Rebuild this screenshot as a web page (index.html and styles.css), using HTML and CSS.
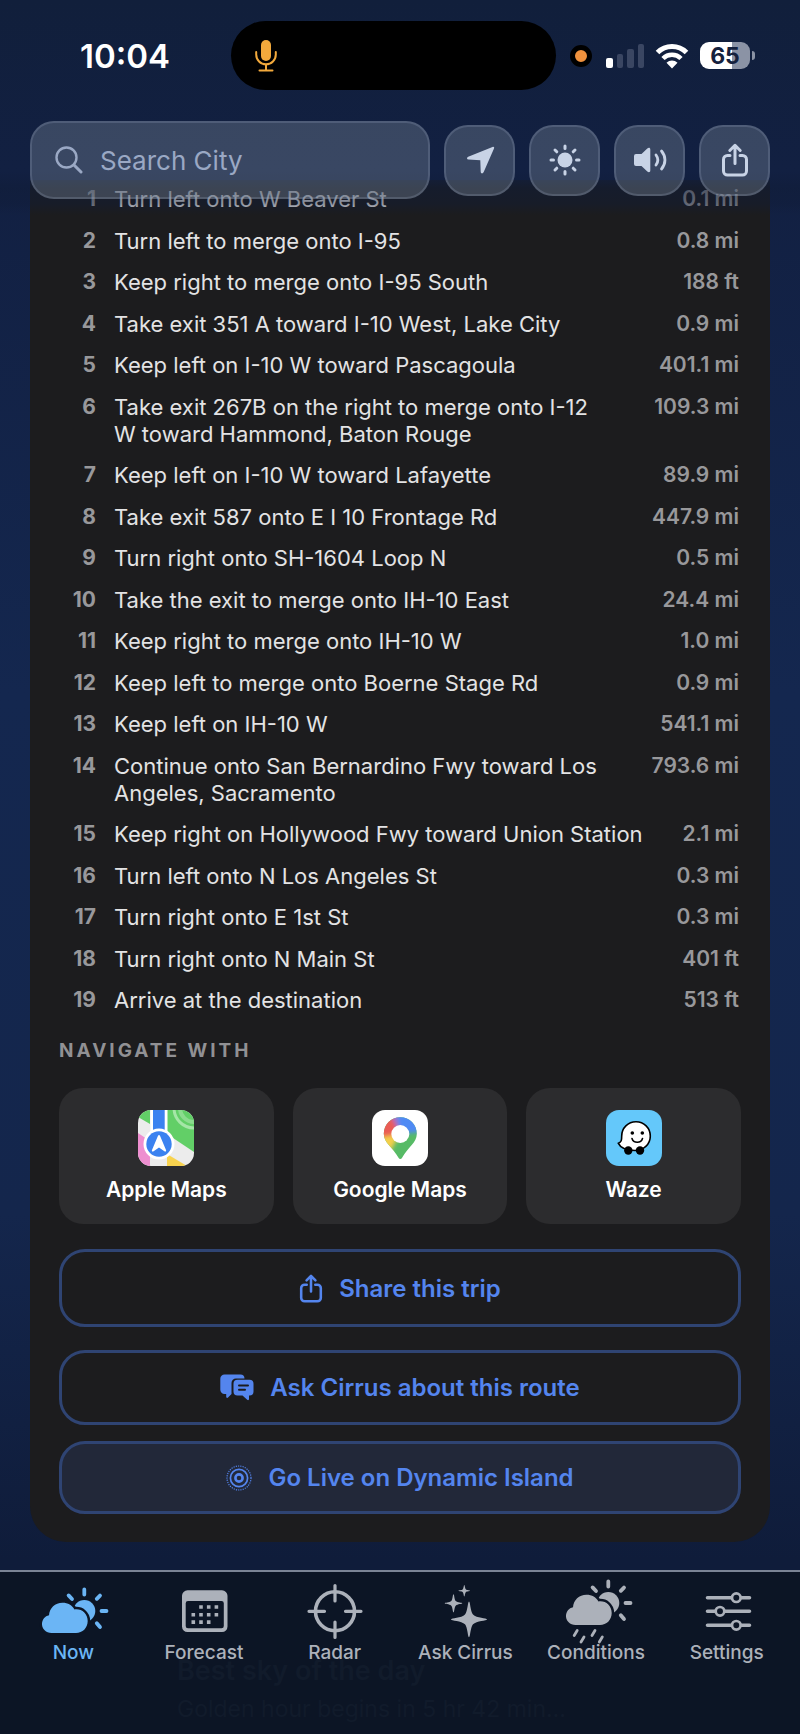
FILE: index.html
```html
<!DOCTYPE html>
<html lang="en">
<head>
    <meta charset="UTF-8">
    <meta name="viewport" content="width=device-width, initial-scale=1.0">
    <title>Cirrus - Route</title>
    <link rel="stylesheet" href="styles.css">
</head>
<body>
    <!-- shared icon shapes -->
    <svg class="defs" width="0" height="0" aria-hidden="true">
        <symbol id="cloud-sun" viewBox="0 0 72 62" overflow="visible">
            <circle cx="47.3" cy="31" r="11" fill="currentColor"/>
            <path d="M47.3 9.5v5M64.5 31h5M59.8 18.8l3.2-3.2M59.8 43.2l3.2 3.8M35 19l-3.4-3.6" fill="none" stroke="currentColor" stroke-width="3.8" stroke-linecap="round"/>
            <path class="cloud" d="M14.5 53C9 53 5 49 5 44.3C5 39.5 8 36 12 35.2C12.5 28 18 22.7 25.5 22.7C31 22.7 35.2 25.4 37.5 29.5C44.5 28.5 50.7 33.5 50.7 41C50.7 48 45.5 53 39 53Z" fill="currentColor"/>
        </symbol>
        <symbol id="share" viewBox="0 0 28 34">
            <path d="M9 12.500H6.500a4 4 0 0 0-4 4V28a4 4 0 0 0 4 4h15a4 4 0 0 0 4-4V16.500a4 4 0 0 0-4-4H19M14 20.500V3M8.800 7.500L14 2.300l5.200 5.200" fill="none" stroke="currentColor" stroke-width="3" stroke-linecap="round" stroke-linejoin="round"/>
        </symbol>
    </svg>

    <header class="header">
        <div class="status">
            <span class="time">10:04</span>
            <div class="island">
                <svg width="22" height="34" viewBox="0 0 22 34">
                    <rect x="6" y="1" width="10" height="21" rx="5" fill="#f2a93c"/>
                    <path d="M1.200 13v2.500a9.800 9.800 0 0 0 19.600 0V13M11 25.500V31M4.500 31.500h13" fill="none" stroke="#f2a93c" stroke-width="2" stroke-linecap="round"/>
                </svg>
            </div>
            <span class="mic-dot"></span>
            <svg class="signal" width="39" height="25" viewBox="0 0 39 25">
                <rect x="0" y="15" width="7" height="10" rx="2" fill="#fff"/>
                <rect x="11" y="11" width="6" height="14" rx="2" fill="#3a4662"/>
                <rect x="21" y="6" width="7" height="19" rx="2" fill="#3a4662"/>
                <rect x="32" y="1" width="6" height="24" rx="2" fill="#3a4662"/>
            </svg>
            <svg class="wifi" width="34" height="26" viewBox="0 0 34 26">
                <path d="M2.500 9.500a20.500 20.500 0 0 1 29 0" fill="none" stroke="#fff" stroke-width="5"/>
                <path d="M8 15.500a12.700 12.700 0 0 1 18 0" fill="none" stroke="#fff" stroke-width="4.600"/>
                <path d="M11.500 19.700a8 8 0 0 1 11 0L17 25.500Z" fill="#fff"/>
            </svg>
            <div class="battery">65</div>
        </div>

        <div class="toolbar">
            <label class="search">
                <svg width="28" height="28" viewBox="0 0 28 28">
                    <circle cx="11.500" cy="11.500" r="10" fill="none" stroke="currentColor" stroke-width="2.400"/>
                    <path d="M19 19l7 7" stroke="currentColor" stroke-width="3" stroke-linecap="round"/>
                </svg>
                <input type="text" placeholder="Search City" aria-label="Search City">
            </label>
            <button class="tool" type="button" aria-label="My location">
                <svg width="36" height="36" viewBox="0 0 36 36">
                    <path d="M30.500 5C31.800 4.500 32.600 5.300 32 6.600L21.600 30.300C20.800 32 18.800 31.800 18.700 29.800L18.300 18.300L6.500 17.600C4.600 17.400 4.500 15.500 6.200 14.800Z" fill="currentColor"/>
                </svg>
            </button>
            <button class="tool" type="button" aria-label="Brightness">
                <svg width="36" height="36" viewBox="0 0 36 36">
                    <circle cx="18" cy="18" r="7.500" fill="currentColor"/>
                    <path d="M18 4v2.500M18 29.500V32M4 18h2.500M29.500 18H32M8 8l1.800 1.800M26.200 26.200L28 28M8 28l1.800-1.800M26.200 9.800L28 8" stroke="currentColor" stroke-width="3" stroke-linecap="round"/>
                </svg>
            </button>
            <button class="tool" type="button" aria-label="Sound">
                <svg width="36" height="36" viewBox="0 0 36 36">
                    <path d="M2 14a2 2 0 0 1 2-2h5.500L15.300 6.500C16.800 5.200 18.300 5.700 18.300 7.500V28.500C18.300 30.300 16.800 30.800 15.300 29.500L9.500 24H4a2 2 0 0 1-2-2Z" fill="currentColor"/>
                    <path d="M24 13c2.200 3 2.200 7 0 10M29.500 9c4.600 5.500 4.600 12.500 0 18" fill="none" stroke="currentColor" stroke-width="2.800" stroke-linecap="round"/>
                </svg>
            </button>
            <button class="tool" type="button" aria-label="Share">
                <svg width="28" height="34"><use href="#share"/></svg>
            </button>
        </div>
    </header>

    <main class="main">
        <section class="card">
            <ol class="steps">
                <li><span class="num">1</span><span class="text">Turn left onto W Beaver St</span><span class="dist">0.1 mi</span></li>
                <li><span class="num">2</span><span class="text">Turn left to merge onto I-95</span><span class="dist">0.8 mi</span></li>
                <li><span class="num">3</span><span class="text">Keep right to merge onto I-95 South</span><span class="dist">188 ft</span></li>
                <li><span class="num">4</span><span class="text">Take exit 351 A toward I-10 West, Lake City</span><span class="dist">0.9 mi</span></li>
                <li><span class="num">5</span><span class="text">Keep left on I-10 W toward Pascagoula</span><span class="dist">401.1 mi</span></li>
                <li><span class="num">6</span><span class="text">Take exit 267B on the right to merge onto I-12 W&nbsp;toward Hammond, Baton Rouge</span><span class="dist">109.3 mi</span></li>
                <li><span class="num">7</span><span class="text">Keep left on I-10 W toward Lafayette</span><span class="dist">89.9 mi</span></li>
                <li><span class="num">8</span><span class="text">Take exit 587 onto E I 10 Frontage Rd</span><span class="dist">447.9 mi</span></li>
                <li><span class="num">9</span><span class="text">Turn right onto SH-1604 Loop N</span><span class="dist">0.5 mi</span></li>
                <li><span class="num">10</span><span class="text">Take the exit to merge onto IH-10 East</span><span class="dist">24.4 mi</span></li>
                <li><span class="num">11</span><span class="text">Keep right to merge onto IH-10 W</span><span class="dist">1.0 mi</span></li>
                <li><span class="num">12</span><span class="text">Keep left to merge onto Boerne Stage Rd</span><span class="dist">0.9 mi</span></li>
                <li><span class="num">13</span><span class="text">Keep left on IH-10 W</span><span class="dist">541.1 mi</span></li>
                <li><span class="num">14</span><span class="text">Continue onto San Bernardino Fwy toward Los Angeles, Sacramento</span><span class="dist">793.6 mi</span></li>
                <li><span class="num">15</span><span class="text">Keep right on Hollywood Fwy toward Union Station</span><span class="dist">2.1 mi</span></li>
                <li><span class="num">16</span><span class="text">Turn left onto N Los Angeles St</span><span class="dist">0.3 mi</span></li>
                <li><span class="num">17</span><span class="text">Turn right onto E 1st St</span><span class="dist">0.3 mi</span></li>
                <li><span class="num">18</span><span class="text">Turn right onto N Main St</span><span class="dist">401 ft</span></li>
                <li><span class="num">19</span><span class="text">Arrive at the destination</span><span class="dist">513 ft</span></li>
            </ol>

            <h2 class="heading">NAVIGATE WITH</h2>
            <div class="apps">
                <button class="app" type="button">
                    <svg class="app-icon" width="56" height="56" viewBox="0 0 56 56">
                        <rect width="56" height="56" fill="#ececec"/>
                        <path d="M0 0H12V14L0 7Z" fill="#62cf67"/>
                        <path d="M29 0H56V42L29 24Z" fill="#62cf67"/>
                        <circle cx="56" cy="-2" r="20" fill="none" stroke="#a5e6a7" stroke-width="3"/>
                        <circle cx="56" cy="-2" r="14" fill="none" stroke="#8bdc8e" stroke-width="4"/>
                        <path d="M0 23L12 31V56H0Z" fill="#ee8fd0"/>
                        <path d="M29 44L49 56H29Z" fill="#f8d34f"/>
                        <path d="M12.500 0h17v24h-17Z" fill="#fff"/>
                        <path d="M15 0h11.700v24H15Z" fill="#3b82f0"/>
                        <circle cx="21" cy="34" r="15.500" fill="#fff"/>
                        <circle cx="21" cy="34" r="12.700" fill="#3b82f0"/>
                        <path d="M20 25.800c.5-1.200 1.500-1.200 2 0l6 14.200c.5 1.300-.5 2-1.600 1.300L21 37.500l-5.400 3.800c-1.100.7-2.100 0-1.600-1.300Z" fill="#fff"/>
                    </svg>
                    Apple Maps
                </button>
                <button class="app" type="button">
                    <svg class="app-icon" width="56" height="56" viewBox="0 0 56 56">
                        <defs>
                            <clipPath id="pin"><path d="M28.300 7.300C19 7.300 11.800 14.700 11.800 23.800C11.800 33 21 37.500 26.500 47.800C27.400 49.500 29.200 49.500 30.100 47.800C35.600 37.500 44.800 33 44.800 23.800C44.800 14.700 37.600 7.300 28.300 7.300Z"/></clipPath>
                            <filter id="soft"><feGaussianBlur stdDeviation="2.200"/></filter>
                        </defs>
                        <rect width="56" height="56" fill="#fff"/>
                        <g clip-path="url(#pin)">
                            <rect width="56" height="56" fill="#57bb66"/>
                            <g filter="url(#soft)">
                                <path d="M28 24L3 22L4 44H17Z" fill="#f3cf4b"/>
                                <path d="M28 24L5 28L2 0H22Z" fill="#ea5b55"/>
                                <path d="M28 24L17 2L26 0Z" fill="#a270c8"/>
                                <path d="M28 24L24 0H54L50 22Z" fill="#4f8af4"/>
                            </g>
                        </g>
                        <circle cx="28.300" cy="24" r="9" fill="#fff"/>
                    </svg>
                    Google Maps
                </button>
                <button class="app" type="button">
                    <svg class="app-icon" width="56" height="56" viewBox="0 0 56 56">
                        <rect width="56" height="56" fill="#64c8fa"/>
                        <path d="M30 11.700C38 11.700 44.300 18 44.300 26C44.300 34.500 37.500 40.500 29 40.500C21 40.500 14.500 38 12.200 33.200C15.500 32.500 15.700 30 15.700 26C15.700 18 22 11.700 30 11.700Z" fill="#fff" stroke="#000" stroke-width="1.600" stroke-linejoin="round"/>
                        <circle cx="22.300" cy="40.500" r="4.200"/>
                        <circle cx="34" cy="40.500" r="4.200"/>
                        <circle cx="26.300" cy="23" r="1.800"/>
                        <circle cx="36.300" cy="23" r="1.800"/>
                        <path d="M26 28.500c1.500 5 9 5 10.500 0" fill="none" stroke="#000" stroke-width="1.600" stroke-linecap="round"/>
                    </svg>
                    Waze
                </button>
            </div>

            <button class="action share-trip" type="button">
                <svg width="24" height="29"><use href="#share"/></svg>
                Share this trip
            </button>
            <button class="action ask" type="button">
                <svg width="34" height="27" viewBox="0 0 34 27">
                    <path d="M4.500 0.500h16c2.500 0 4 1.500 4 4H16a4.500 4.500 0 0 0-4.500 4.500v11L8 23.500c-.8.800-1.800.3-1.800-.8V20H4.500a4.200 4.200 0 0 1-4.200-4.200V4.700A4.200 4.200 0 0 1 4.500.5Z" fill="currentColor"/>
                    <path d="M17.500 5.800h12a4 4 0 0 1 4 4V17.500a4 4 0 0 1-4 4H29V25c0 1.200-1 1.500-1.800.8L22.500 21.500h-5a4 4 0 0 1-4-4V9.800a4 4 0 0 1 4-4Z" fill="currentColor"/>
                    <path d="M19 11.500h9M19 15.700h6" stroke="#1c1c1e" stroke-width="2" stroke-linecap="round"/>
                </svg>
                Ask Cirrus about this route
            </button>
            <button class="action live" type="button">
                <svg width="26" height="26" viewBox="0 0 26 26" fill="none" stroke="currentColor">
                    <circle cx="13" cy="13" r="3.600" stroke-width="2.600"/>
                    <circle cx="13" cy="13" r="8.600" stroke-width="1.700"/>
                    <circle cx="13" cy="13" r="12" stroke-width="1.200" stroke-dasharray="1.200 1.100"/>
                </svg>
                Go Live on Dynamic Island
            </button>
        </section>
    </main>

    <nav class="tabs">
        <!-- next card, just visible through the bar -->
        <div class="next-card" aria-hidden="true">
            <b>Best sky of the day</b>
            <span>Golden hour begins in 5 hr 42 min…</span>
        </div>
        <a class="tab active" href="#">
            <svg width="72" height="62"><use href="#cloud-sun"/></svg>
            Now
        </a>
        <a class="tab" href="#">
            <svg width="72" height="62" viewBox="0 0 72 62" fill="currentColor">
                <path fill-rule="evenodd" d="M19.500 10.300H54a5.500 5.500 0 0 1 5.500 5.500V46.500a5.500 5.500 0 0 1-5.500 5.500H19.500a5.500 5.500 0 0 1-5.500-5.500V15.800a5.500 5.500 0 0 1 5.500-5.500ZM20 21a2.300 2.300 0 0 0-2.300 2.300V46a2.300 2.300 0 0 0 2.300 2.300H53.500A2.300 2.300 0 0 0 55.800 46V23.300A2.300 2.300 0 0 0 53.500 21Z"/>
                <path d="M31.200 25.200h3.600v3.600h-3.600zM38.900 25.200h3.600v3.600h-3.600zM46.600 25.200h3.600v3.600h-3.600zM23.500 32.900h3.600v3.600h-3.600zM31.200 32.900h3.600v3.600h-3.600zM38.900 32.900h3.600v3.600h-3.600zM46.600 32.900h3.600v3.600h-3.600zM23.500 40.300h3.600v3.600h-3.600zM31.200 40.300h3.600v3.600h-3.600zM38.900 40.300h3.600v3.600h-3.600z"/>
            </svg>
            Forecast
        </a>
        <a class="tab" href="#">
            <svg width="72" height="62" viewBox="0 0 72 62" fill="none" stroke="currentColor" stroke-linecap="round">
                <circle cx="36" cy="31.300" r="19.500" stroke-width="3.600"/>
                <path d="M36 5.500V21M36 42V57.500M10 31.300H25.500M46.500 31.300H62" stroke-width="3.200"/>
            </svg>
            Radar
        </a>
        <a class="tab" href="#">
            <svg width="72" height="62" viewBox="0 0 72 62" fill="currentColor">
                <path d="M40 21.500C41.300 21.500 41.200 31 44 34.500C47.500 38.200 58 38 58 39.400C58 40.800 47.500 40.600 44 44.300C41.200 47.800 41.300 57.300 40 57.300C38.700 57.300 38.800 47.800 36 44.300C32.500 40.600 22 40.800 22 39.400C22 38 32.500 38.200 36 34.500C38.800 31 38.700 21.500 40 21.500Z"/>
                <path d="M24.500 14.200C25.300 14.200 25.200 19 26.700 21C28.500 22.700 33.300 22.500 33.300 23.300C33.300 24.100 28.500 24 26.700 25.700C25.200 27.600 25.300 32.300 24.500 32.300C23.700 32.300 23.800 27.600 22.300 25.700C20.500 24 15.700 24.100 15.700 23.300C15.700 22.500 20.500 22.700 22.300 21C23.800 19 23.700 14.200 24.500 14.200Z"/>
                <path d="M35.300 5C35.900 5 35.800 8 36.800 9.200C38 10.400 41 10.100 41 10.700C41 11.300 38 11 36.800 12.200C35.800 13.400 35.900 16.400 35.300 16.400C34.700 16.400 34.800 13.400 33.800 12.200C32.600 11 29.600 11.300 29.600 10.700C29.600 10.100 32.600 10.400 33.800 9.200C34.800 8 34.700 5 35.300 5Z"/>
            </svg>
            Ask Cirrus
        </a>
        <a class="tab" href="#">
            <svg width="72" height="62" viewBox="0 0 72 62" overflow="visible">
                <use href="#cloud-sun" x="1" y="-8" width="72" height="62"/>
                <path d="M17.200 50.500l-3 5M24 57l-3 5M35 50.500l-3 5M42.300 57l-3 5" stroke="currentColor" stroke-width="2.800" stroke-linecap="round"/>
            </svg>
            Conditions
        </a>
        <a class="tab" href="#">
            <svg width="72" height="62" viewBox="0 0 72 62" stroke="currentColor" fill="#0c1525">
                <path d="M16.500 17.700H58.500M16.500 31.300H58.500M16.500 45.300H58.500" stroke-width="3.600" stroke-linecap="round"/>
                <circle cx="45.300" cy="17.700" r="4.300" stroke-width="2.700"/>
                <circle cx="29" cy="31.300" r="4.300" stroke-width="2.700"/>
                <circle cx="45.300" cy="45.300" r="4.300" stroke-width="2.700"/>
            </svg>
            Settings
        </a>
    </nav>
</body>
</html>
```

FILE: styles.css
```css
* {
    box-sizing: border-box;
}

body {
    margin: 0;
    min-height: 100vh;
    display: flex;
    flex-direction: column;
    font-family: Inter, "Liberation Sans", sans-serif;
    color: #e3e3e4;
    background: linear-gradient(#111f3b, #122042 10%, #14274f 40%, #14264c 70%, #0f1c3a 90%);
}

button {
    font-family: inherit;
    cursor: pointer;
}

svg {
    display: block;
    flex-shrink: 0;
}

.defs {
    position: absolute;
}

/* header, the list scrolls under it */
.header {
    position: sticky;
    top: 0;
    z-index: 2;
    padding: 21px 30px 16px;
    background: linear-gradient(#111f3b, #122042 170px, rgba(16, 28, 56, 0.55) 188px, rgba(16, 28, 56, 0.4) 204px, rgba(16, 28, 56, 0));
}

.status {
    display: flex;
    align-items: center;
    height: 69px;
    padding: 0 15px 0 50px;
}

.time {
    width: 151px;
    font-size: 33px;
    font-weight: 600;
    color: #fff;
}

.island {
    display: flex;
    align-items: center;
    width: 325px;
    height: 69px;
    padding-left: 24px;
    border-radius: 35px;
    background-color: #000;
}

.mic-dot {
    width: 22px;
    height: 22px;
    margin: 0 14px;
    border: 5px solid #000;
    border-radius: 50%;
    background-color: #f0923e;
}

.wifi {
    margin: 0 11px 0 10px;
}

.battery {
    position: relative;
    width: 50px;
    height: 27px;
    border-radius: 9px;
    background: linear-gradient(90deg, #fff 64%, #8b93a5 64%);
    color: #15213d;
    font-size: 23px;
    font-weight: 700;
    line-height: 28px;
    text-align: center;
}

.battery::after {
    content: "";
    position: absolute;
    top: 9px;
    right: -5px;
    width: 3px;
    height: 9px;
    border-radius: 0 5px 5px 0;
    background-color: #8b93a5;
}

.toolbar {
    display: flex;
    align-items: center;
    gap: 14px;
    margin-top: 31px;
}

.search,
.tool {
    border: 2px solid rgba(160, 175, 200, 0.22);
    border-radius: 24px;
    background-color: rgba(150, 162, 175, 0.3);
}

.search {
    flex: 1;
    min-width: 0;
    display: flex;
    align-items: center;
    gap: 17px;
    height: 78px;
    padding: 0 23px;
    color: #9aa8c4;
}

.search input {
    width: 100%;
    padding: 0;
    border: none;
    outline: none;
    background: none;
    font-family: inherit;
    font-size: 26px;
    color: #fff;
}

.search input::placeholder {
    color: #9aa8c4;
    opacity: 1;
}

.tool {
    display: flex;
    align-items: center;
    justify-content: center;
    width: 71px;
    height: 71px;
    padding: 0;
    color: #c8d3e6;
}

.main {
    flex: 1;
    display: flex;
    margin-top: -35px;
    padding: 0 30px 28px;
}

.card {
    flex: 1;
    display: flex;
    flex-direction: column;
    padding: 6px 29px 28px;
    border-radius: 0 0 36px 36px;
    background-color: #1c1c1e;
}

.steps {
    flex: 1;
    display: flex;
    flex-direction: column;
    justify-content: space-between;
    gap: 14px;
    margin: 0;
    padding: 0;
    list-style: none;
}

.steps li {
    display: flex;
    align-items: flex-start;
    gap: 18px;
    font-size: 22px;
    line-height: 27px;
}

.num,
.dist {
    font-size: 21px;
    line-height: 26px;
    color: #98989b;
}

.num {
    width: 37px;
    font-weight: 700;
    text-align: right;
}

.text {
    flex: 1;
}

.dist {
    font-weight: 600;
    padding-right: 2px;
}

.heading {
    margin: 24px 0;
    font-size: 19px;
    font-weight: 700;
    line-height: 26px;
    letter-spacing: 3px;
    color: #919194;
}

.apps {
    display: grid;
    grid-template-columns: repeat(3, 1fr);
    gap: 19px;
    margin-bottom: 25px;
}

.app {
    display: flex;
    flex-direction: column;
    align-items: center;
    gap: 11px;
    padding: 22px 0;
    border: none;
    border-radius: 24px;
    background-color: #2c2c2e;
    color: #fff;
    font-size: 21px;
    font-weight: 600;
    line-height: 25px;
}

.app-icon {
    border-radius: 13px;
}

.action {
    display: flex;
    align-items: center;
    justify-content: center;
    gap: 16px;
    padding: 0;
    border: 3px solid #2f4473;
    border-radius: 26px;
    background: none;
    color: #5485ee;
    font-size: 24px;
    font-weight: 600;
}

.share-trip {
    height: 78px;
    margin-bottom: 23px;
}

.ask {
    height: 75px;
    margin-bottom: 16px;
}

.live {
    height: 73px;
    background-color: #222839;
}

/* bottom tab bar */
.tabs {
    position: sticky;
    bottom: 0;
    display: grid;
    grid-template-columns: repeat(6, 1fr);
    height: 164px;
    padding: 8px 8px 0;
    border-top: 2px solid #7b8495;
    background-color: #0c1525;
    overflow: hidden;
}

.tab {
    position: relative;
    display: flex;
    flex-direction: column;
    align-items: center;
    color: #acb1ba;
    font-size: 19px;
    font-weight: 500;
    line-height: 22px;
    text-decoration: none;
    white-space: nowrap;
}

.tab.active {
    color: #6bb5f5;
}

.cloud {
    stroke: #0c1525;
    stroke-width: 5px;
    paint-order: stroke;
}

.next-card {
    position: absolute;
    top: 84px;
    left: 177px;
    display: flex;
    flex-direction: column;
    gap: 8px;
    color: #111b2b;
    font-size: 23px;
    line-height: 30px;
}

.next-card b {
    font-size: 27px;
    font-weight: 600;
}
```
